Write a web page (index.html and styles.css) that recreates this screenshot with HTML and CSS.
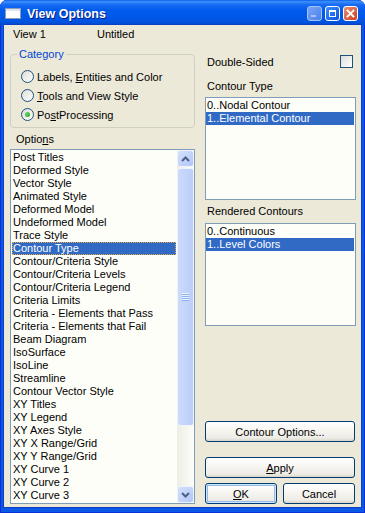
FILE: index.html
```html
<!DOCTYPE html>
<html lang="en">
<head>
    <meta charset="UTF-8">
    <title>View Options</title>
    <link rel="stylesheet" href="styles.css">
</head>
<body>
    <div class="window">
        <div class="titlebar">
            <svg class="app-icon" width="16" height="11" viewBox="0 0 16 11">
                <rect x="0.5" y="0.5" width="15" height="10" fill="#fff" stroke="#8d9bb8"/>
                <rect x="1" y="1" width="14" height="2" fill="#dfe5f0"/>
            </svg>
            <span class="title">View Options</span>
            <div class="caption-buttons">
                <span class="cap cap-min">
                    <svg width="13" height="13" viewBox="0 0 13 13"><rect x="3" y="8" width="5" height="2" fill="#a9c1f5"/></svg>
                </span>
                <span class="cap cap-max">
                    <svg width="13" height="13" viewBox="0 0 13 13"><rect x="3.5" y="3.5" width="6" height="6" fill="none" stroke="#fff"/><rect x="3" y="3" width="7" height="2" fill="#fff"/></svg>
                </span>
                <span class="cap cap-close">
                    <svg width="13" height="13" viewBox="0 0 13 13"><path d="M3.5 3.5L9.5 9.5M9.5 3.5L3.5 9.5" stroke="#fff" stroke-width="1.8" stroke-linecap="square"/></svg>
                </span>
            </div>
        </div>

        <div class="client">
            <div class="left-col">
                <div class="view-row">
                    <span class="view-name">View 1</span>
                    <span>Untitled</span>
                </div>

                <fieldset class="groupbox">
                    <legend>Category</legend>
                    <div class="radio-row"><span class="radio"></span><span>Labels, <u>E</u>ntities and Color</span></div>
                    <div class="radio-row"><span class="radio"></span><span><u>T</u>ools and View Style</span></div>
                    <div class="radio-row"><span class="radio checked"></span><span>Po<u>s</u>tProcessing</span></div>
                </fieldset>

                <div class="field-label options-label">Optio<u>n</u>s</div>

                <div class="listbox options-box">
                    <ul class="items">
                        <li>Post Titles</li>
                        <li>Deformed Style</li>
                        <li>Vector Style</li>
                        <li>Animated Style</li>
                        <li>Deformed Model</li>
                        <li>Undeformed Model</li>
                        <li>Trace Style</li>
                        <li class="selected focused">Contour Type</li>
                        <li>Contour/Criteria Style</li>
                        <li>Contour/Criteria Levels</li>
                        <li>Contour/Criteria Legend</li>
                        <li>Criteria Limits</li>
                        <li>Criteria - Elements that Pass</li>
                        <li>Criteria - Elements that Fail</li>
                        <li>Beam Diagram</li>
                        <li>IsoSurface</li>
                        <li>IsoLine</li>
                        <li>Streamline</li>
                        <li>Contour Vector Style</li>
                        <li>XY Titles</li>
                        <li>XY Legend</li>
                        <li>XY Axes Style</li>
                        <li>XY X Range/Grid</li>
                        <li>XY Y Range/Grid</li>
                        <li>XY Curve 1</li>
                        <li>XY Curve 2</li>
                        <li>XY Curve 3</li>
                    </ul>
                    <div class="scrollbar">
                        <div class="sb-btn">
                            <svg width="9" height="6" viewBox="0 0 9 6"><path d="M1 5L4.5 1.5L8 5" fill="none" stroke="#4d6185" stroke-width="2"/></svg>
                        </div>
                        <div class="sb-thumb"><span class="sb-grip"></span></div>
                        <div class="sb-track"></div>
                        <div class="sb-btn">
                            <svg width="9" height="6" viewBox="0 0 9 6"><path d="M1 1L4.5 4.5L8 1" fill="none" stroke="#4d6185" stroke-width="2"/></svg>
                        </div>
                    </div>
                </div>
            </div>

            <div class="right-col">
                <div class="check-row">
                    <span>Double-Sided</span>
                    <span class="checkbox"></span>
                </div>

                <div class="field-label contour-label">Contour Type</div>
                <div class="listbox small-box contour-box">
                    <ul class="items">
                        <li>0..Nodal Contour</li>
                        <li class="selected">1..Elemental Contour</li>
                    </ul>
                </div>

                <div class="field-label rendered-label">Rendered Contours</div>
                <div class="listbox small-box rendered-box">
                    <ul class="items">
                        <li>0..Continuous</li>
                        <li class="selected">1..Level Colors</li>
                    </ul>
                </div>

                <button class="btn btn-contour">Contour Options...</button>
                <button class="btn btn-apply"><u>A</u>pply</button>
                <div class="btn-row">
                    <button class="btn btn-default"><u>O</u>K</button>
                    <button class="btn">Cancel</button>
                </div>
            </div>
        </div>
    </div>
</body>
</html>
```

FILE: styles.css
```css
* {
    margin: 0;
    padding: 0;
    box-sizing: border-box;
}

body {
    background-color: #fff;
    font-family: "Liberation Sans", Arial, sans-serif;
    font-size: 11px;
    color: #000;
}

.window {
    width: 365px;
    height: 513px;
    display: flex;
    flex-direction: column;
    background-color: #0b57e6;
    border-radius: 7px 7px 0 0;
    box-shadow: inset 1px 0 #0831d9, inset -1px 0 #0831d9, inset 0 -1px #0831d9;
    overflow: hidden;
}

/* title bar */
.titlebar {
    height: 25px;
    flex: none;
    display: flex;
    align-items: center;
    padding: 2px 7px 0 5px;
    background: linear-gradient(to bottom, #0a5ee8 0%, #3d91fb 7%, #1a6cf3 17%, #005ced 40%, #0057e7 70%, #0052dd 90%, #0043c6 100%);
    border-radius: 7px 7px 0 0;
}

.app-icon {
    margin-right: 6px;
    flex: none;
}

.title {
    color: #fff;
    font-weight: bold;
    font-size: 12.5px;
    text-shadow: 1px 1px #0a1883;
}

.caption-buttons {
    margin-left: auto;
    display: flex;
    gap: 3px;
    margin-top: -1px;
}

.cap {
    width: 15px;
    height: 15px;
    border: 1px solid #fff;
    border-radius: 3px;
    display: flex;
    align-items: center;
    justify-content: center;
}

.cap svg {
    display: block;
}

.cap-min {
    border-color: #a7c2f7;
    background: linear-gradient(135deg, #7aa5f6, #4a80ec);
}

.cap-max {
    background: linear-gradient(135deg, #3d8dfd, #0c54e2);
}

.cap-close {
    background: linear-gradient(135deg, #eb8e72, #c8401d);
}

/* client area */
.client {
    flex: 1;
    margin: 0 4px 6px;
    background-color: #ece9d8;
    box-shadow: 0 0 0 1px #0b3fc4;
    display: flex;
    gap: 10px;
    padding: 0 5px 3px 6px;
}

.left-col {
    width: 185px;
    display: flex;
    flex-direction: column;
}

.right-col {
    width: 151px;
    display: flex;
    flex-direction: column;
}

.view-row {
    margin-top: 3px;
    height: 13px;
    line-height: 13px;
    display: flex;
    padding-left: 3px;
}

.view-name {
    width: 84px;
}

.groupbox {
    margin-top: 7px;
    border: 1px solid #d0d0bf;
    border-radius: 4px;
    padding: 6px 4px 3px 6px;
}

.groupbox legend {
    color: #0046d5;
    padding: 0 2px;
    line-height: 13px;
}

.radio-row {
    height: 19px;
    display: flex;
    align-items: center;
    margin-left: 4px;
}

.radio {
    width: 13px;
    height: 13px;
    border-radius: 50%;
    border: 1px solid #1c5180;
    background: linear-gradient(135deg, #dcdcd7, #fff);
    margin-right: 3px;
    display: flex;
    align-items: center;
    justify-content: center;
}

.radio.checked::after {
    content: "";
    width: 5px;
    height: 5px;
    border-radius: 50%;
    background: radial-gradient(circle at 35% 35%, #62dc62, #1f9c1f);
}

.field-label {
    line-height: 13px;
    height: 13px;
}

.options-label {
    margin-top: 5px;
    padding-left: 6px;
}

/* list boxes */
.listbox {
    border: 1px solid #7f9db9;
    background-color: #fefef8;
    display: flex;
    overflow: hidden;
}

.options-box {
    margin-top: 3px;
    height: 355px;
}

.items {
    list-style: none;
    flex: 1;
    padding: 1px 1px 0 1px;
    overflow: hidden;
}

.small-box .items {
    padding: 1px 1px 0 0;
}

.items li {
    height: 13px;
    line-height: 11px;
    border: 1px solid transparent;
    white-space: nowrap;
}

.items li.selected {
    background-color: #316ac5;
    color: #fff;
}

.items li.focused {
    border: 1px dotted #e3a84a;
}

.scrollbar {
    width: 17px;
    flex: none;
    display: flex;
    flex-direction: column;
    background: linear-gradient(to right, #eeede5, #fdfdfa);
}

.sb-btn {
    height: 17px;
    flex: none;
    border: 1px solid #eef3fe;
    border-radius: 3px;
    background: linear-gradient(135deg, #d3e0fd, #b3c7f6);
    display: flex;
    align-items: center;
    justify-content: center;
}

.sb-thumb {
    margin-top: 1px;
    height: 258px;
    flex: none;
    border: 1px solid #eef3fe;
    border-radius: 3px;
    background: linear-gradient(to right, #ccdafc, #bccdf8);
    display: flex;
    align-items: center;
    justify-content: center;
}

.sb-grip {
    width: 7px;
    height: 8px;
    background: repeating-linear-gradient(to bottom, #eef4fe 0 1px, #8cb0f8 1px 2px);
}

.sb-track {
    flex: 1;
}

/* right column */
.check-row {
    margin-top: 30px;
    height: 13px;
    display: flex;
    align-items: center;
    justify-content: space-between;
    padding: 0 3px 0 2px;
}

.checkbox {
    width: 13px;
    height: 13px;
    border: 1px solid #1c5180;
    background: linear-gradient(135deg, #dcdcd7, #fff);
}

.contour-label {
    margin-top: 12px;
    padding-left: 2px;
}

.contour-box {
    margin-top: 4px;
    height: 103px;
}

.rendered-label {
    margin-top: 5px;
    padding-left: 2px;
}

.rendered-box {
    margin-top: 5px;
    height: 103px;
}

.btn {
    height: 21px;
    margin-right: 1px;
    border: 1px solid #003c74;
    border-radius: 3px;
    background: linear-gradient(to bottom, #fff 0%, #f6f5f0 45%, #ecebe5 85%, #d8d3c8 100%);
    font-family: "Liberation Sans", Arial, sans-serif;
    font-size: 11px;
    color: #000;
}

.btn-contour {
    margin-top: 95px;
}

.btn-apply {
    margin-top: 15px;
}

.btn-row {
    margin-top: 5px;
    display: flex;
    gap: 6px;
    margin-right: 1px;
}

.btn-row .btn {
    width: 72px;
    margin-right: 0;
}

.btn-default {
    box-shadow: inset 0 0 0 1px #cee7ff, inset 0 0 0 2px #98b8ea;
}
```
